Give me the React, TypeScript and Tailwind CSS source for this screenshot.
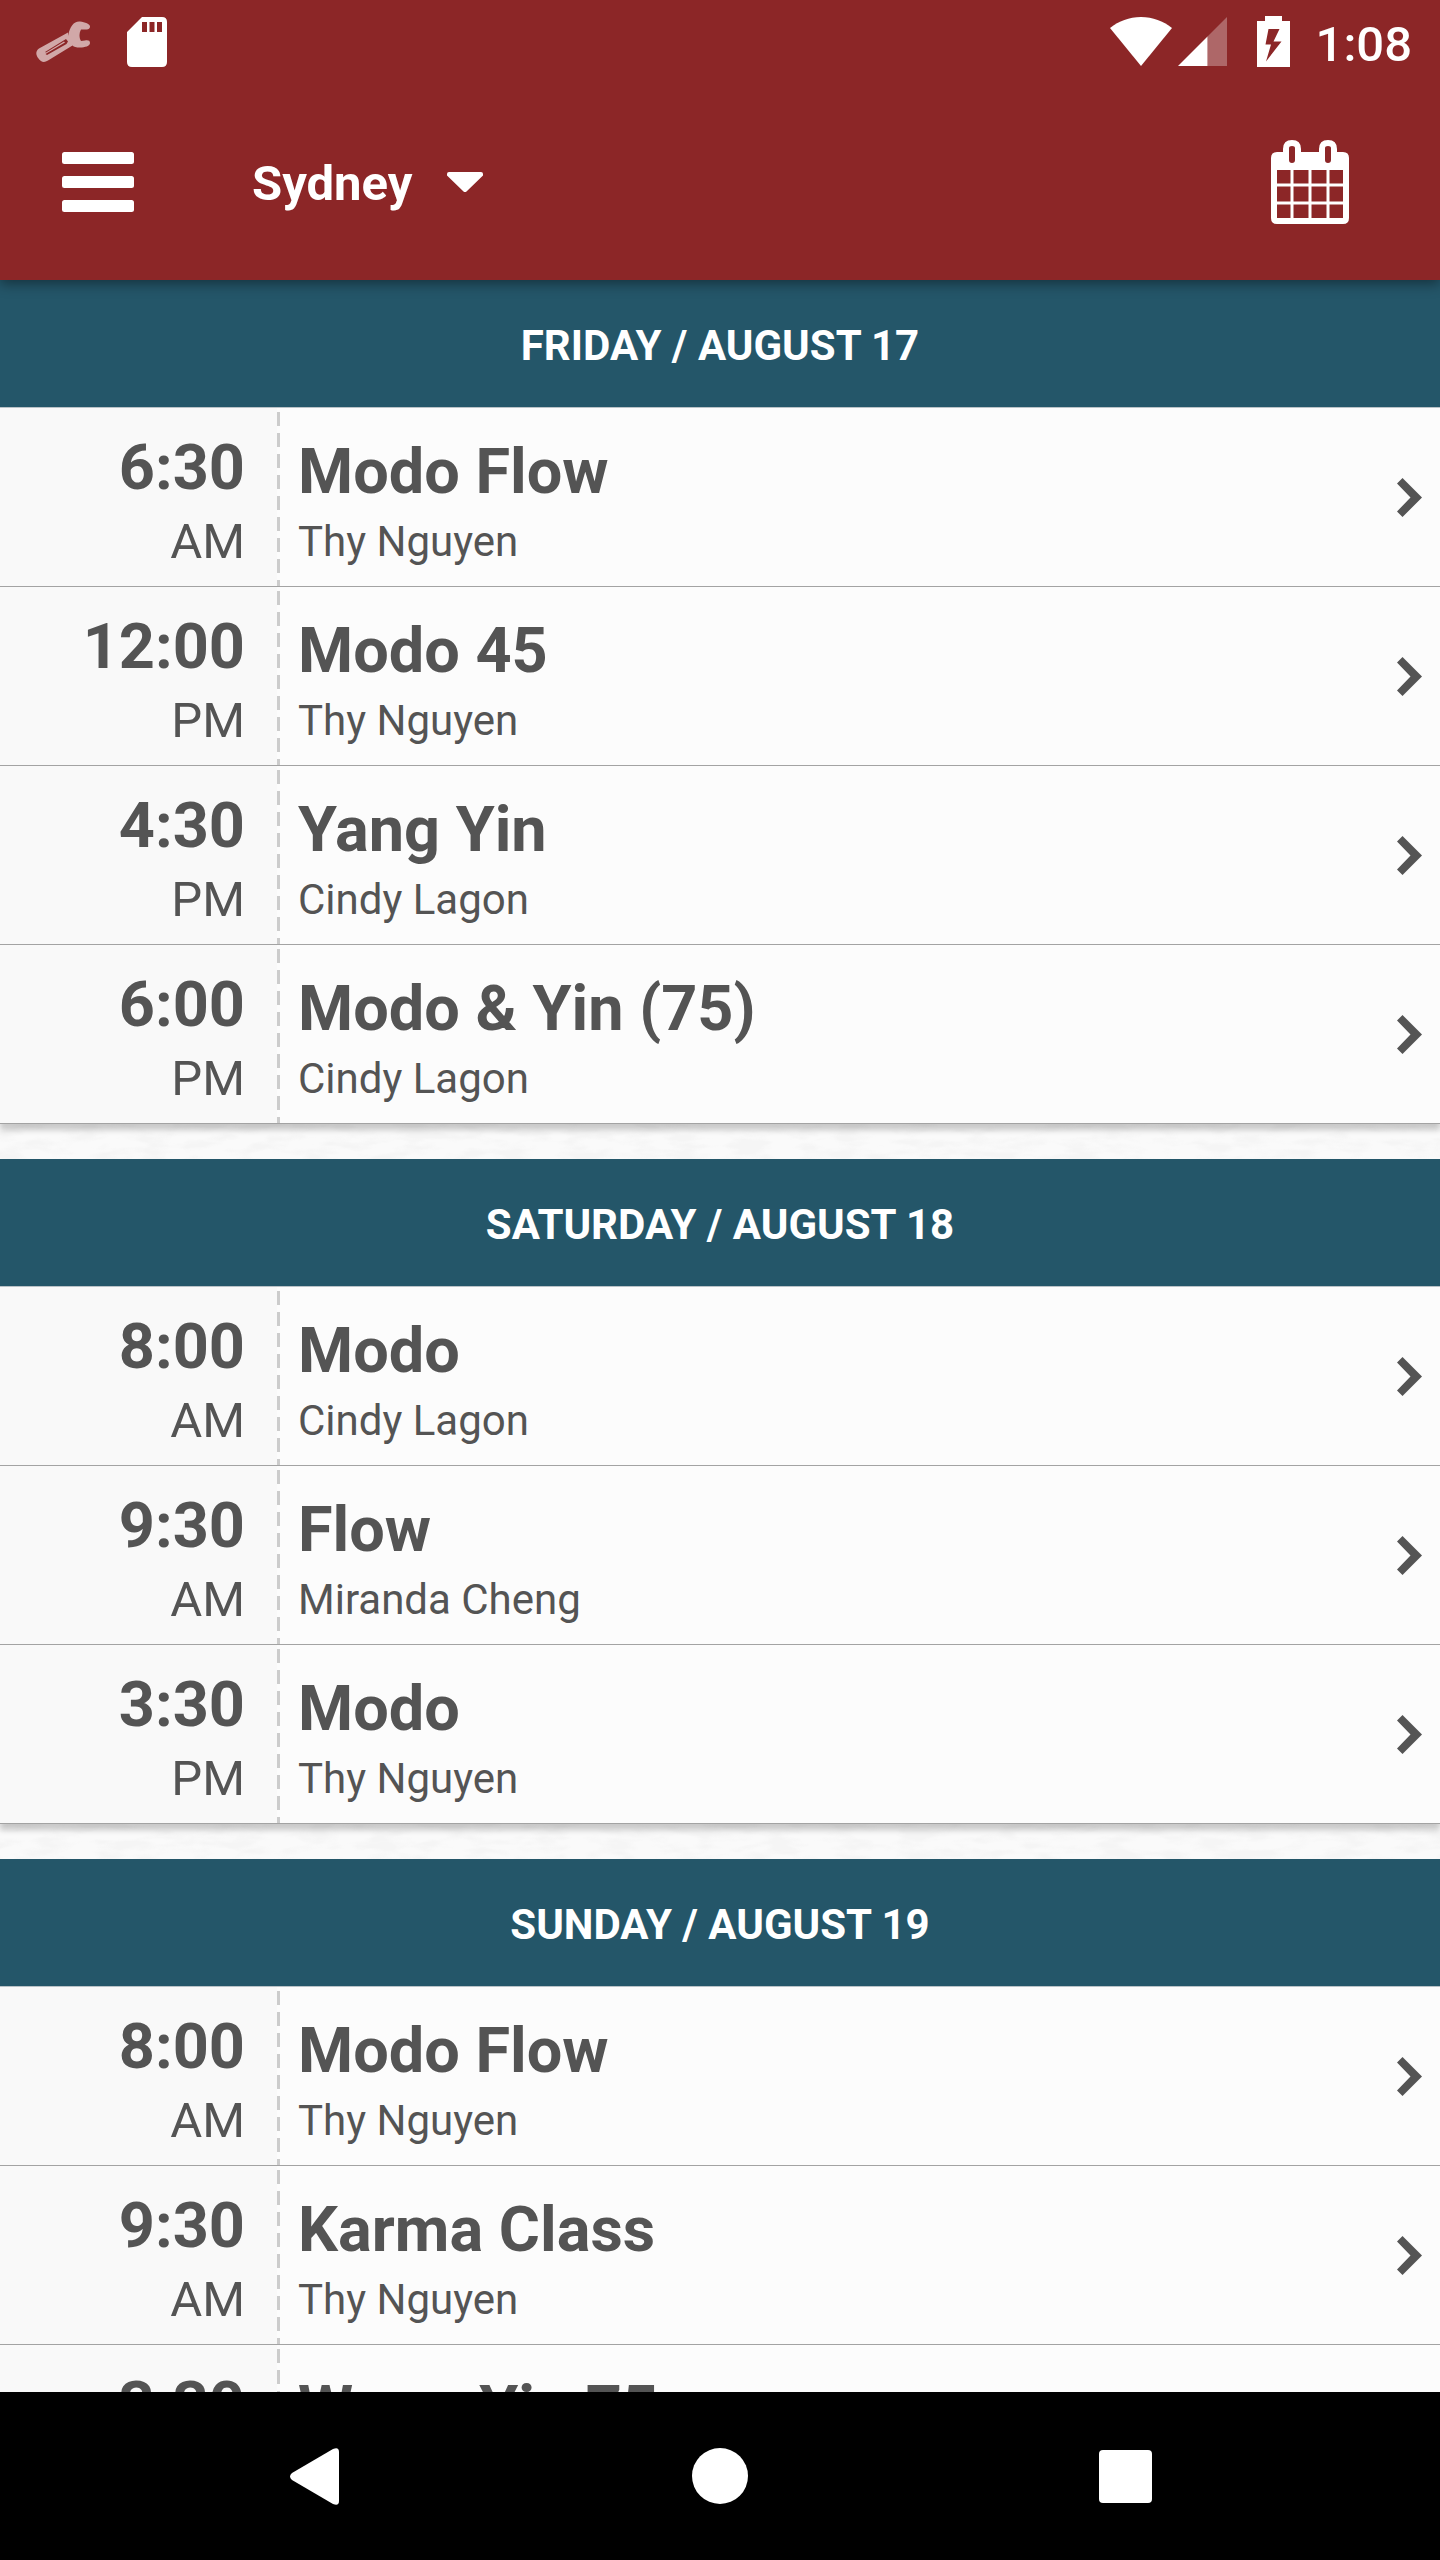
import React, { useState } from 'react';

interface ClassSession {
  id: number;
  time: string;
  period: 'AM' | 'PM';
  name: string;
  teacher: string;
}

interface ScheduleDay {
  id: string;
  label: string;
  sessions: ClassSession[];
}

const STUDIOS = ['Sydney'];

const SCHEDULE: ScheduleDay[] = [
  {
    id: 'fri',
    label: 'FRIDAY / AUGUST 17',
    sessions: [
      { id: 1, time: '6:30', period: 'AM', name: 'Modo Flow', teacher: 'Thy Nguyen' },
      { id: 2, time: '12:00', period: 'PM', name: 'Modo 45', teacher: 'Thy Nguyen' },
      { id: 3, time: '4:30', period: 'PM', name: 'Yang Yin', teacher: 'Cindy Lagon' },
      { id: 4, time: '6:00', period: 'PM', name: 'Modo & Yin (75)', teacher: 'Cindy Lagon' },
    ],
  },
  {
    id: 'sat',
    label: 'SATURDAY / AUGUST 18',
    sessions: [
      { id: 5, time: '8:00', period: 'AM', name: 'Modo', teacher: 'Cindy Lagon' },
      { id: 6, time: '9:30', period: 'AM', name: 'Flow', teacher: 'Miranda Cheng' },
      { id: 7, time: '3:30', period: 'PM', name: 'Modo', teacher: 'Thy Nguyen' },
    ],
  },
  {
    id: 'sun',
    label: 'SUNDAY / AUGUST 19',
    sessions: [
      { id: 8, time: '8:00', period: 'AM', name: 'Modo Flow', teacher: 'Thy Nguyen' },
      { id: 9, time: '9:30', period: 'AM', name: 'Karma Class', teacher: 'Thy Nguyen' },
      { id: 10, time: '3:30', period: 'PM', name: 'Warm Yin 75', teacher: 'Cindy Lagon' },
    ],
  },
];

const StatusBar: React.FC = () => (
  <div className="flex h-[84px] items-end justify-between pb-[17px] pl-9 pr-7">
    <div className="flex items-end gap-[37px]">
      <svg className="h-[46px] w-[54px] opacity-60" viewBox="0 0 54 46">
        <path d="M32 15C34 5 38 0 44 .5C49 1 54 3 54 5.500C54 8 52 8.500 49 8.500L45 8.500C43 12 43 17 45 20L49 19.500C52 19 54 19.500 54 22C54 25 49 26.500 44 26.500C40 26.500 38 26 36.500 24.500L12 39.500C8 42 5 41 2.500 37.500C-.5 34 -.5 30 3 27.500L32 11.500Z" fill="#fff" />
        <path d="M9 31L30 18L32 20.500L30.500 23L11 34L9.500 33L12 31.500L29 21.500L28 20.500L10 31.500Z" fill="#8c2627" />
      </svg>
      <svg className="h-[50px] w-10" viewBox="0 0 40 50" fill="#fff">
        <path fillRule="evenodd" d="M15 0H35Q40 0 40 5V45Q40 50 35 50H5Q0 50 0 45V15ZM15 5V15H20V5ZM22.500 5V15H27.500V5ZM30 5V15H35V5Z" />
      </svg>
    </div>
    <div className="flex items-end">
      <svg className="mr-1.5 h-[50px] w-[62px]" viewBox="0 0 62 50" fill="#fff">
        <path d="M31 49L0 11C9 4 19 0 31 0S53 4 62 11Z" />
      </svg>
      <svg className="mr-[30px] h-[50px] w-[49px]" viewBox="0 0 49 50" fill="#fff">
        <path d="M0 49L29.500 19.500V49Z" />
        <path d="M29.500 19.500L49 0V49H29.500Z" fillOpacity="0.300" />
      </svg>
      <svg className="mr-[26px] h-[51px] w-[33px]" viewBox="0 0 33 51" fill="#fff">
        <path fillRule="evenodd" d="M8 0H25V5H33V51H0V5H8ZM11.500 13L8.500 28.500H14L9 45.500L24.500 25.500H16.500L22.500 13Z" />
      </svg>
      <time className="text-[49px]/[44px] font-medium">1:08</time>
    </div>
  </div>
);

const Toolbar: React.FC = () => {
  const [studio, setStudio] = useState(STUDIOS[0]);

  return (
    <div className="flex h-[196px] items-center pl-[62px] pr-[91px]">
      <button type="button" aria-label="Menu">
        <svg className="h-[60px] w-[72px]" viewBox="0 0 72 60" fill="#fff">
          <rect width="72" height="12" rx="2.500" />
          <rect y="24" width="72" height="12" rx="2.500" />
          <rect y="48" width="72" height="12" rx="2.500" />
        </svg>
      </button>
      <div className="ml-[118px] flex items-center">
        <select
          aria-label="Studio"
          value={studio}
          onChange={(e) => setStudio(e.target.value)}
          className="-mr-9 h-20 cursor-pointer appearance-none bg-transparent pr-[70px] pt-1 text-[49px]/[72px] font-bold outline-none"
        >
          {STUDIOS.map(s => <option key={s} value={s}>{s}</option>)}
        </select>
        <svg className="pointer-events-none h-5 w-9" viewBox="0 0 36 20" fill="#fff">
          <path d="M2 0H34Q36 0 36 2V3.500L19.500 19.500Q18 21 16.500 19.500L0 3.500V2Q0 0 2 0Z" />
        </svg>
      </div>
      <button type="button" aria-label="Calendar" className="ml-auto">
        <svg className="h-[84px] w-[78px]" viewBox="0 0 78 84" fill="none">
          <path
            fill="#fff"
            fillRule="evenodd"
            d="M6 12H12V9Q12 0 21 0T30 9V12H48V9Q48 0 57 0T66 9V12H72Q78 12 78 18V78Q78 84 72 84H6Q0 84 0 78V18Q0 12 6 12ZM6 30V78H72V30ZM18 8V20Q18 23 21 23T24 20V8Q24 6 21 6T18 8ZM54 8V20Q54 23 57 23T60 20V8Q60 6 57 6T54 8Z"
          />
          <path d="M21 30V78M39 30V78M57 30V78M6 45H72M6 63H72" stroke="#fff" strokeWidth="3" />
        </svg>
      </button>
    </div>
  );
};

const SessionRow: React.FC<{ session: ClassSession }> = ({ session }) => (
  <li>
    <button type="button" className="flex h-[179px] w-full cursor-pointer border-b border-[#a3a3a3] bg-[#fcfcfc] text-[#545454]">
      <div className="h-full w-[277px] shrink-0 bg-[#f9f9f9] pr-8 pt-6 text-right">
        <div className="text-[63px]/[72px] font-bold">{session.time}</div>
        <div className="mt-1.5 text-[49px]/[64px]">{session.period}</div>
      </div>
      {/* dashed divider */}
      <div className="mt-1 w-[3px] shrink-0 self-stretch bg-[repeating-linear-gradient(to_bottom,#cccccc_0_14px,transparent_14px_21px)]" />
      <div className="min-w-0 flex-1 pl-[18px] pt-7 text-left">
        <div className="text-[63px]/[72px] font-bold">{session.name}</div>
        <div className="mt-1.5 text-[42px]/[56px]">{session.teacher}</div>
      </div>
      <svg className="mr-[18px] h-[39px] w-[25px] shrink-0 self-center" viewBox="0 0 25 39" fill="currentColor">
        <path d="M5.500 0L25 19.500L5.500 39L0 33.500L13.500 19.500L0 5.500Z" />
      </svg>
    </button>
  </li>
);

const DaySection: React.FC<{ day: ScheduleDay }> = ({ day }) => (
  <section className="shadow-[0_6px_6px_rgba(0,0,0,0.2)]">
    <h2 className="flex h-32 items-center justify-center border-b border-[#b9c2c7] bg-[#245669] pt-1 text-[42px]/[56px] font-bold text-white">{day.label}</h2>
    <ul>
      {day.sessions.map(s => <SessionRow key={s.id} session={s} />)}
    </ul>
  </section>
);

const NavBar: React.FC = () => (
  <nav className="grid h-[168px] shrink-0 grid-cols-3 items-center justify-items-center bg-black px-28">
    <button type="button" aria-label="Back">
      <svg className="h-[57px] w-[49px]" viewBox="0 0 49 57" fill="#fff">
        <path d="M2 25L43 1Q49 -1.500 49 4V53Q49 58.500 43 56L2 32Q-2 28.500 2 25Z" />
      </svg>
    </button>
    <button type="button" aria-label="Home">
      <svg className="size-14" viewBox="0 0 56 56" fill="#fff">
        <circle cx="28" cy="28" r="28" />
      </svg>
    </button>
    <button type="button" aria-label="Recent apps">
      <svg className="size-[53px]" viewBox="0 0 53 53" fill="#fff">
        <rect width="53" height="53" rx="4" />
      </svg>
    </button>
  </nav>
);

const App: React.FC = () => {
  return (
    <div className="flex h-screen flex-col overflow-hidden bg-[#fafafa] font-['Roboto',sans-serif]">
      <header className="relative z-10 shrink-0 bg-[#8c2627] text-white shadow-[0_4px_12px_rgba(0,0,0,0.4)]">
        <StatusBar />
        <Toolbar />
      </header>
      <main className="relative min-h-0 flex-1 overflow-y-auto [scrollbar-width:none]">
        {/* paper grain behind the day cards */}
        <svg className="absolute inset-0 size-full opacity-5" aria-hidden="true">
          <filter id="grain">
            <feTurbulence type="fractalNoise" baseFrequency="0.03 0.1" numOctaves="3" seed="4" />
            <feColorMatrix type="matrix" values="0 0 0 0 0.4  0 0 0 0 0.4  0 0 0 0 0.4  0 0 0 4 -1.7" />
          </filter>
          <rect width="100%" height="100%" filter="url(#grain)" />
        </svg>
        <div className="relative space-y-[35px]">
          {SCHEDULE.map(day => <DaySection key={day.id} day={day} />)}
        </div>
      </main>
      <NavBar />
    </div>
  );
};

export default App;
